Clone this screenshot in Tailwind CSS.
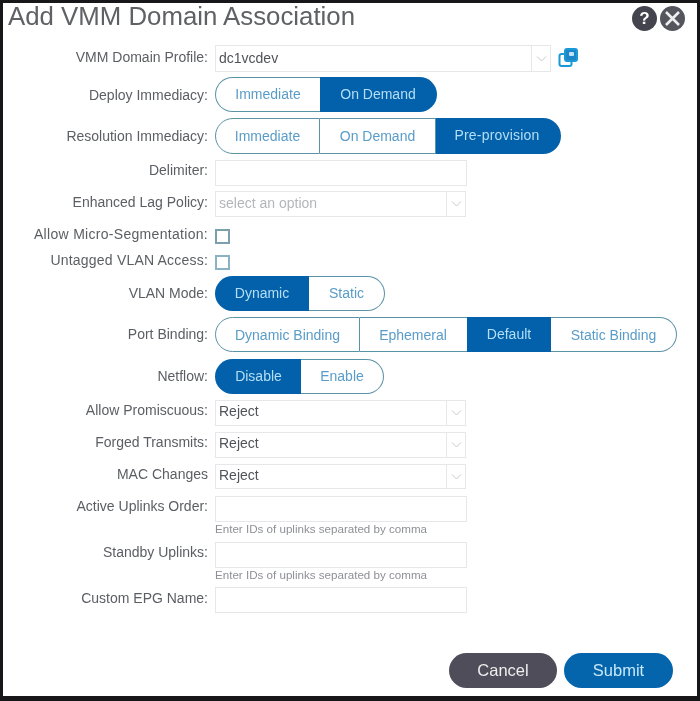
<!doctype html>
<html lang="en">
  <head>
    <meta charset="UTF-8" />
    <title>Add VMM Domain Association</title>
    <script src="https://cdn.jsdelivr.net/npm/@tailwindcss/browser@4"></script>
  </head>
  <body class="bg-black">
    <main class="w-[700px] h-[701px] bg-[#17171a] pt-[3px] pl-[3px] pr-[3px] pb-[5px] font-['Liberation_Sans',Arial,sans-serif]">
      <div class="flex flex-col h-full bg-white text-[14px] text-[#5b5e63] blur-[0.4px]">
        <!-- header -->
        <header class="flex items-start justify-between h-[42px] pl-[5px] pr-[12px]">
          <h1 class="text-[25.8px] leading-[27px] text-[#5f6165]">Add VMM Domain Association</h1>
          <div class="flex gap-[3px] pt-[3px]">
            <span class="flex items-center justify-center size-[25px] rounded-full bg-[#44444e] text-white text-[17px] font-bold">?</span>
            <span class="flex items-center justify-center size-[25px] rounded-full bg-[#55555e]">
              <svg width="17" height="17" viewBox="0 0 17 17" fill="none" stroke="#eeeeee" stroke-width="2.6"><path d="M2 2L15 15M15 2L2 15" /></svg>
            </span>
          </div>
        </header>

        <!-- rows -->
        <div class="flex items-center h-[27px]">
          <label class="w-[205px] text-right pb-[3px]">VMM Domain Profile:</label>
          <div class="flex ml-[7px] w-[336px] h-full border border-[#e6e7e9] text-[#50535a]">
            <span class="flex-1 pl-[3px] leading-[24px]">dc1vcdev</span>
            <span class="flex items-center justify-center w-[19px] border-l border-[#e6e7e9]">
              <svg width="11" height="6" viewBox="0 0 11 6" fill="none" stroke="#c6c9cc"><path d="M1 .5L5.5 5L10 .5" /></svg>
            </span>
          </div>
          <svg class="ml-[7px] mb-[3px]" width="20" height="19" viewBox="0 0 20 19" fill="none" stroke="#1b98d6" stroke-width="2">
            <rect x="1.5" y="6" width="12" height="12" rx="2" />
            <rect x="7" y="1" width="12" height="12" rx="2" fill="#1c86c8" />
            <rect x="11" y="4" width="5" height="4" rx="1" fill="#bfe4f7" stroke="none" />
          </svg>
        </div>

        <div class="flex items-center h-[35px] mt-[5px]">
          <label class="w-[205px] text-right pt-[2px]">Deploy Immediacy:</label>
          <div class="flex ml-[7px] h-full text-[#5a9cc8] text-center leading-[35px]">
            <span class="w-[105px] border border-r-0 border-[#5b93a6] rounded-l-full leading-[33px]">Immediate</span>
            <span class="w-[117px] pr-[1px] bg-[#0261aa] text-[#b4def5] rounded-r-full">On Demand</span>
          </div>
        </div>

        <div class="flex items-center h-[36px] mt-[6px]">
          <label class="w-[205px] text-right">Resolution Immediacy:</label>
          <div class="flex ml-[7px] h-full text-[#5a9cc8] text-center leading-[35px]">
            <span class="w-[105px] border border-[#5b93a6] rounded-l-full leading-[34px]">Immediate</span>
            <span class="w-[116px] border-y border-r border-[#5b93a6] leading-[34px]">On Demand</span>
            <span class="w-[125px] pr-[3px] bg-[#0261aa] text-[#b4def5] rounded-r-full tracking-[0.2px]">Pre-provision</span>
          </div>
        </div>

        <div class="flex items-center h-[26px] mt-[6px]">
          <label class="w-[205px] text-right pb-[5px]">Delimiter:</label>
          <div class="ml-[7px] w-[252px] h-full border border-[#e6e7e9]"></div>
        </div>

        <div class="flex items-center h-[26px] mt-[5px]">
          <label class="w-[205px] text-right pb-[4px]">Enhanced Lag Policy:</label>
          <div class="flex ml-[7px] w-[251px] h-full border border-[#e6e7e9] text-[#b3b6ba]">
            <span class="flex-1 pl-[3px] leading-[22px]">select an option</span>
            <span class="flex items-center justify-center w-[19px] border-l border-[#e6e7e9]">
              <svg width="11" height="6" viewBox="0 0 11 6" fill="none" stroke="#c6c9cc"><path d="M1 .5L5.5 5L10 .5" /></svg>
            </span>
          </div>
        </div>

        <div class="flex items-center h-[16px] mt-[11px]">
          <label class="w-[205px] text-right pb-[3px] tracking-[0.3px]">Allow Micro-Segmentation:</label>
          <span class="ml-[7px] size-[15px] border-2 border-[#7c9fae]"></span>
        </div>

        <div class="flex items-center h-[16px] mt-[10px]">
          <label class="w-[205px] text-right pb-[3px] tracking-[0.2px]">Untagged VLAN Access:</label>
          <span class="ml-[7px] size-[15px] border-2 border-[#8ab2c2]"></span>
        </div>

        <div class="flex items-center h-[35px] mt-[6px]">
          <label class="w-[205px] text-right">VLAN Mode:</label>
          <div class="flex ml-[7px] h-full text-[#5a9cc8] text-center leading-[35px]">
            <span class="w-[94px] bg-[#0261aa] text-[#b4def5] rounded-l-full">Dynamic</span>
            <span class="w-[76px] border border-l-0 border-[#5b93a6] rounded-r-full leading-[33px]">Static</span>
          </div>
        </div>

        <div class="flex items-center h-[35px] mt-[6px]">
          <label class="w-[205px] text-right">Port Binding:</label>
          <div class="flex ml-[7px] h-full text-[#5a9cc8] text-center leading-[34px]">
            <span class="w-[145px] border border-[#5b93a6] rounded-l-full">Dynamic Binding</span>
            <span class="w-[107px] pr-[1px] border-y border-[#5b93a6]">Ephemeral</span>
            <span class="w-[84px] bg-[#0261aa] text-[#b4def5]">Default</span>
            <span class="w-[126px] border border-l-0 border-[#5b93a6] rounded-r-full">Static Binding</span>
          </div>
        </div>

        <div class="flex items-center h-[35px] mt-[7px]">
          <label class="w-[205px] text-right">Netflow:</label>
          <div class="flex ml-[7px] h-full text-[#5a9cc8] text-center leading-[35px]">
            <span class="w-[86px] pl-[1px] bg-[#0261aa] text-[#b4def5] rounded-l-full">Disable</span>
            <span class="w-[83px] border border-l-0 border-[#5b93a6] rounded-r-full leading-[33px]">Enable</span>
          </div>
        </div>

        <div class="flex items-center h-[26px] mt-[6px]">
          <label class="w-[205px] text-right pb-[5px]">Allow Promiscuous:</label>
          <div class="flex ml-[7px] w-[251px] h-full border border-[#e6e7e9] text-[#50535a]">
            <span class="flex-1 pl-[3px] leading-[21px]">Reject</span>
            <span class="flex items-center justify-center w-[19px] border-l border-[#e6e7e9]">
              <svg width="11" height="6" viewBox="0 0 11 6" fill="none" stroke="#c6c9cc"><path d="M1 .5L5.5 5L10 .5" /></svg>
            </span>
          </div>
        </div>

        <div class="flex items-center h-[26px] mt-[6px]">
          <label class="w-[205px] text-right pb-[5px]">Forged Transmits:</label>
          <div class="flex ml-[7px] w-[251px] h-full border border-[#e6e7e9] text-[#50535a]">
            <span class="flex-1 pl-[3px] leading-[21px]">Reject</span>
            <span class="flex items-center justify-center w-[19px] border-l border-[#e6e7e9]">
              <svg width="11" height="6" viewBox="0 0 11 6" fill="none" stroke="#c6c9cc"><path d="M1 .5L5.5 5L10 .5" /></svg>
            </span>
          </div>
        </div>

        <div class="flex items-center h-[25px] mt-[6px]">
          <label class="w-[205px] text-right pb-[4px]">MAC Changes</label>
          <div class="flex ml-[7px] w-[251px] h-full border border-[#e6e7e9] text-[#50535a]">
            <span class="flex-1 pl-[3px] leading-[21px]">Reject</span>
            <span class="flex items-center justify-center w-[19px] border-l border-[#e6e7e9]">
              <svg width="11" height="6" viewBox="0 0 11 6" fill="none" stroke="#c6c9cc"><path d="M1 .5L5.5 5L10 .5" /></svg>
            </span>
          </div>
        </div>

        <div class="flex items-center h-[26px] mt-[7px]">
          <label class="w-[205px] text-right pb-[5px]">Active Uplinks Order:</label>
          <div class="ml-[7px] w-[252px] h-full border border-[#e6e7e9]"></div>
        </div>
        <p class="ml-[212px] mt-[1px] h-[19px] text-[11.6px] leading-[12px] text-[#8d9096]">Enter IDs of uplinks separated by comma</p>

        <div class="flex items-center h-[26px]">
          <label class="w-[205px] text-right pb-[5px]">Standby Uplinks:</label>
          <div class="ml-[7px] w-[252px] h-full border border-[#e6e7e9]"></div>
        </div>
        <p class="ml-[212px] mt-[1px] h-[18px] text-[11.6px] leading-[12px] text-[#8d9096]">Enter IDs of uplinks separated by comma</p>

        <div class="flex items-center h-[26px]">
          <label class="w-[205px] text-right pb-[4px]">Custom EPG Name:</label>
          <div class="ml-[7px] w-[252px] h-full border border-[#e6e7e9]"></div>
        </div>

        <!-- footer -->
        <footer class="flex justify-end gap-[7px] mt-auto pr-[24px] pb-[8px]">
          <button class="w-[108px] h-[35px] rounded-full bg-[#4e4d59] text-[#eeeeee] text-[16.5px]">Cancel</button>
          <button class="w-[109px] h-[35px] rounded-full bg-[#0465ac] text-[#c6e8fa] text-[16.5px]">Submit</button>
        </footer>
      </div>
    </main>
  </body>
</html>
